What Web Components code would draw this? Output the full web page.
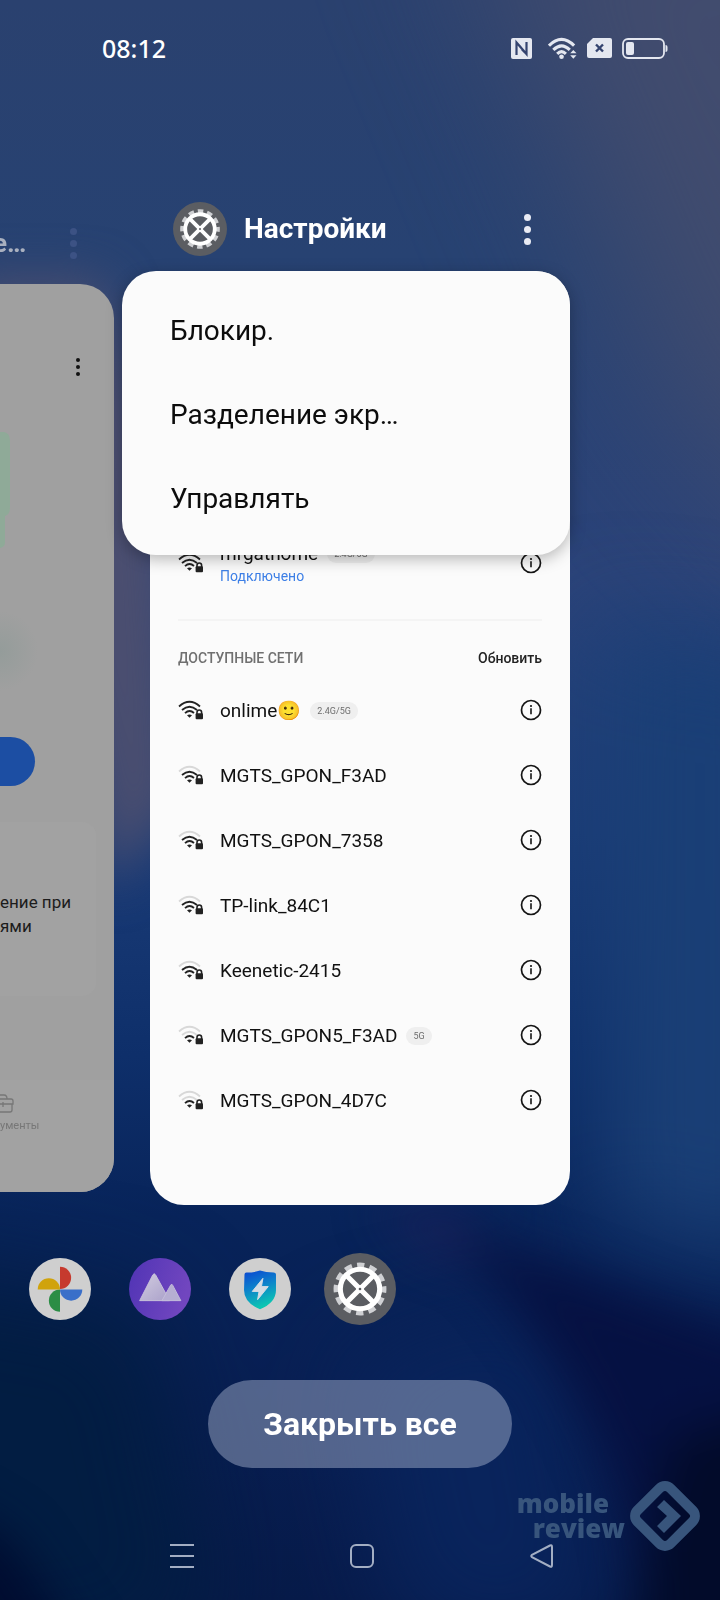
<!DOCTYPE html>
<html lang="ru">
<head>
  <meta charset="utf-8">
  <meta name="viewport" content="width=device-width, initial-scale=1">
  <title>Недавние приложения</title>
  <style>
    body {
      margin: 0;
      background: #0a2458;
      color: #111;
      font-family: Roboto, "Noto Sans", sans-serif;
    }
  </style>
</head>
<body>
  <uc-recents-screen></uc-recents-screen>

  <script>
    class Wallpaper extends HTMLElement {
      constructor() {
        super()
        this.attachShadow({ mode: 'open' })
        this.shadowRoot.innerHTML = `
          <style>
            :host {
              position: absolute;
              inset: 0;
              z-index: -1;
              overflow: hidden;
            }

            svg {
              display: block;
              width: 100%;
              height: 100%;
            }
          </style>
          <svg viewBox="0 0 720 1600" preserveAspectRatio="none" aria-hidden="true">
            <defs>
              <linearGradient id="sky" x1="0" y1="0" x2="0" y2="1">
                <stop offset="0" stop-color="#2a416f"/>
                <stop offset=".16" stop-color="#274272"/>
                <stop offset=".36" stop-color="#2b4379"/>
                <stop offset=".52" stop-color="#1b3c77"/>
                <stop offset=".66" stop-color="#0e2f6a"/>
                <stop offset=".76" stop-color="#08245a"/>
                <stop offset=".88" stop-color="#081e52"/>
                <stop offset="1" stop-color="#071a49"/>
              </linearGradient>
              <filter id="wide" x="-100%" y="-100%" width="300%" height="300%" color-interpolation-filters="sRGB"><feGaussianBlur stdDeviation="80"/></filter>
              <filter id="soft" x="-100%" y="-100%" width="300%" height="300%" color-interpolation-filters="sRGB"><feGaussianBlur stdDeviation="50"/></filter>
              <filter id="mid" x="-100%" y="-100%" width="300%" height="300%" color-interpolation-filters="sRGB"><feGaussianBlur stdDeviation="24"/></filter>
            </defs>
            <rect width="720" height="1600" fill="url(#sky)"/>
            <path d="M440-160H900V620L680 420Z" fill="#464e6e" opacity=".85" filter="url(#wide)"/>
            <g filter="url(#soft)">
              <path d="M600 620L800 660V1270L600 1220Z" fill="#1a3f76"/>
              <path d="M-120 1260L150 1310L220 1640L-120 1700Z" fill="#021d42"/>
              <path d="M340 1360L560 1300L620 1640L400 1640Z" fill="#09245c"/>
            </g>
            <g filter="url(#mid)">
              <path d="M-40 280L100 280L160 440L180 800L110 890L40 500Z" fill="#4f506f" opacity=".9"/>
              <path d="M370 1205L460 1215L520 1270L430 1250Z" fill="#221f5a" opacity=".7"/>
              <path d="M450 1232C560 1260 640 1300 800 1350V1660H640C650 1500 580 1370 450 1232Z" fill="#060f40" opacity=".9"/>
              <path d="M670 1440L800 1400V1660H630Z" fill="#020b2a"/>
              <path d="M-60 1500L10 1540L90 1660H-60Z" fill="#000c30"/>
            </g>
          </svg>
        `
      }
    }

    class StatusBar extends HTMLElement {
      constructor() {
        super()
        this.attachShadow({ mode: 'open' })
        this.shadowRoot.innerHTML = `
          <style>
            :host {
              display: flex;
              align-items: center;
              justify-content: space-between;
              height: 96px;
              padding: 0 52px 0 102px;
              color: #fff;
            }

            time {
              font: 500 25px/32px "Noto Sans", sans-serif;
            }

            div {
              display: flex;
              align-items: center;
              gap: 10px;
            }

            svg {
              display: block;
              fill: #e4e7f0;
            }

            .nfc {
              margin-right: 6px;
            }
          </style>
          <time>${this.getAttribute('time')}</time>
          <div>
            <svg class="nfc" width="21" height="21" viewBox="0 0 21 21">
              <rect width="21" height="21" rx="2"/>
              <path d="M5.500 17V4.500L15.500 16V4M5.500 4.500L10 9.500M15.500 16L11 11.500" fill="none" stroke="#34436f" stroke-width="2.200"/>
            </svg>
            <svg width="29" height="23" viewBox="0 0 30 23">
              <g fill="none" stroke="#e4e7f0" stroke-width="3.200">
                <path d="M1 8.500Q14 -4.500 27 8.500"/>
                <path d="M5.500 13Q14 4.500 22.500 13"/>
                <path d="M9.500 17Q14 12.500 18.500 17"/>
              </g>
              <circle cx="14" cy="20" r="2.400"/>
              <path d="M23 16.500L26.200 13L29.500 16.500ZM23 18.500H29.500L26.200 22Z"/>
            </svg>
            <svg width="25" height="20" viewBox="0 0 25 20">
              <path d="M6 0H23Q25 0 25 2V18Q25 20 23 20H2Q0 20 0 18V6Z"/>
              <path d="M9 6.500L16 13.500M16 6.500L9 13.500" stroke="#34436f" stroke-width="2.400"/>
            </svg>
            <svg width="46" height="21" viewBox="0 0 46 21">
              <rect x="1" y="1" width="41" height="19" rx="5" fill="none" stroke="#e4e7f0" stroke-width="1.800"/>
              <rect x="4" y="4" width="8" height="13" rx="2"/>
              <path d="M43.500 7Q45.500 7 45.500 9V12Q45.500 14 43.500 14Z"/>
            </svg>
          </div>
        `
      }
    }

    class AppIcon extends HTMLElement {
      constructor() {
        super()
        // every glyph is drawn in a 64 unit disc
        const glyphs = {
          settings: `
            <circle cx="32" cy="32" r="32" fill="#5b5d62"/>
            <circle cx="32" cy="32" r="21" fill="none" stroke="#cfd0d3" stroke-width="5" stroke-dasharray="6.500 4.496" stroke-dashoffset="3.250"/>
            <circle cx="32" cy="32" r="17.500" fill="none" stroke="#fff" stroke-width="4.500"/>
            <path d="M20 20L44 44M44 20L20 44" stroke="#fff" stroke-width="4.500"/>
            <circle cx="32" cy="32" r="3.500" fill="#fff"/>
            <circle cx="32" cy="32" r="1.200" fill="#5b5d62"/>`,
          photos: `
            <circle cx="32" cy="32" r="32" fill="#cfcfcf"/>
            <path d="M32 9A11.500 11.500 0 0 1 32 32Z" fill="#c63a2e"/>
            <path d="M55 32.500A11.500 11.500 0 0 1 32 32.500Z" fill="#3a6fc9"/>
            <path d="M32 55.500A11.500 11.500 0 0 1 32 32.500Z" fill="#2b8d45"/>
            <path d="M9 32.500A11.500 11.500 0 0 1 32 32.500Z" fill="#d0a30c"/>`,
          gallery: `
            <linearGradient id="violet" x1="0" y1="0" x2="1" y2=".3"><stop stop-color="#5034b5"/><stop offset="1" stop-color="#7146bf"/></linearGradient>
            <linearGradient id="hill" x1="0" y1="0" x2="1" y2="1"><stop stop-color="#d2cce0"/><stop offset="1" stop-color="#a9a0c9"/></linearGradient>
            <circle cx="32" cy="32" r="32" fill="url(#violet)"/>
            <path d="M11 44L24.500 17.500Q26 15 27.500 17.500L42 44Z" fill="url(#hill)" stroke="#c8c2da" stroke-linejoin="round"/>
            <path d="M34 44L43 28Q44 26 45 28L53.500 44Z" fill="#b6aed2" stroke="#c4bddb" stroke-linejoin="round"/>`,
          guard: `
            <linearGradient id="shield" x1="0" y1="0" x2=".3" y2="1"><stop stop-color="#0b45d2"/><stop offset=".5" stop-color="#0d83cb"/><stop offset="1" stop-color="#0bc5b2"/></linearGradient>
            <circle cx="32" cy="32" r="32" fill="#cfcfcf"/>
            <path d="M16 17Q16 15 18 15Q26 15 32 13Q38 15 46 15Q48.500 15 48.500 17V33Q48.500 46 32 53Q15.500 46 15.500 33Z" fill="url(#shield)"/>
            <path d="M35 21L24 34.500H31L29.500 43L40.500 29.500H33.500Z" fill="#d5dce4" stroke="#d5dce4" stroke-linejoin="round"/>`
        }

        this.attachShadow({ mode: 'open' })
        this.shadowRoot.innerHTML = `
          <style>
            :host {
              display: block;
              flex: none;
              width: 62px;
              height: 62px;
            }

            svg {
              display: block;
              width: 100%;
              height: 100%;
            }
          </style>
          <svg viewBox="0 0 64 64" aria-hidden="true">${glyphs[this.getAttribute('name')]}</svg>
        `
      }
    }

    class MoreButton extends HTMLElement {
      constructor() {
        super()
        this.attachShadow({ mode: 'open' })
        this.shadowRoot.innerHTML = `
          <style>
            :host {
              display: block;
            }

            button {
              display: flex;
              flex-direction: column;
              align-items: center;
              justify-content: center;
              gap: var(--dot-gap, 5px);
              width: 40px;
              height: 48px;
              padding: 0;
              border: 0;
              background: none;
              color: inherit;
              cursor: pointer;
            }

            i {
              width: var(--dot-size, 7px);
              height: var(--dot-size, 7px);
              border-radius: 50%;
              background: currentColor;
            }
          </style>
          <button type="button" aria-label="Ещё"><i></i><i></i><i></i></button>
        `
      }
    }

    class TaskMenu extends HTMLElement {
      constructor() {
        super()
        this.attachShadow({ mode: 'open' })
        this.shadowRoot.innerHTML = `
          <style>
            :host {
              display: none;
              flex-direction: column;
              box-sizing: border-box;
              padding: 18px 0 14px;
              border-radius: 34px;
              background: #fbfbfb;
              box-shadow: 0 4px 16px rgba(0, 0, 0, 0.28);
            }

            :host([opened]) {
              display: flex;
            }

            ::slotted(button) {
              height: 84px;
              padding: 0 48px;
              border: 0;
              background: none;
              color: #0c0c0c;
              font: 400 28px/36px Roboto, sans-serif;
              text-align: left;
              cursor: pointer;
            }
          </style>
          <slot></slot>
        `
      }
    }

    class WifiNetwork extends HTMLElement {
      constructor() {
        super()
        this.attachShadow({ mode: 'open' })
        const level = Number(this.getAttribute('level'))
        const band = this.getAttribute('band')
        const state = this.getAttribute('state')
        const shade = (n) => level >= n ? '#222' : '#d8d8d8'

        this.shadowRoot.innerHTML = `
          <style>
            :host {
              display: flex;
              align-items: center;
              gap: 16px;
              height: 65px;
            }

            svg {
              display: block;
              flex: none;
              padding-bottom: 2px;
            }

            .text {
              flex: 1;
              min-width: 0;
            }

            .name {
              display: flex;
              align-items: center;
              gap: 9px;
              font-size: 19px;
              line-height: 24px;
              color: #111;
            }

            .band {
              padding: 0 7px;
              border-radius: 9px;
              background: #efefef;
              color: #6e6e6e;
              font-size: 9px;
              line-height: 18px;
            }

            .state {
              font-size: 14px;
              line-height: 20px;
              color: #3d7fe6;
            }

            button {
              padding: 0;
              border: 0;
              background: none;
              cursor: pointer;
            }
          </style>
          <svg width="26" height="20" viewBox="0 0 26 20" aria-hidden="true">
            <g fill="none" stroke-width="1.800">
              <path d="M1 6.500Q11.500 -3 22 6.500" stroke="${shade(3)}"/>
              <path d="M4 10Q11.500 3.500 19 10" stroke="${shade(2)}"/>
              <path d="M7 13.200Q11.500 9 16 13" stroke="${shade(1)}"/>
            </g>
            <path d="M9 15.200Q11.500 13.700 14 15.200L11.500 17.800Z" fill="#222"/>
            <path d="M19 14V12.300A2.300 2.300 0 0 1 23.600 12.300V14" fill="none" stroke="#222" stroke-width="1.600"/>
            <rect x="17.600" y="13.300" width="7.400" height="6" rx="1" fill="#222"/>
          </svg>
          <div class="text">
            <div class="name"><slot></slot>${band ? `<span class="band">${band}</span>` : ''}</div>
            ${state ? `<div class="state">${state}</div>` : ''}
          </div>
          <button type="button" aria-label="Сведения о сети">
            <svg width="22" height="22" viewBox="0 0 22 22">
              <circle cx="11" cy="11" r="9.500" fill="none" stroke="#151515" stroke-width="1.700"/>
              <circle cx="11" cy="7" r="1.100" fill="#151515"/>
              <path d="M11 9.200V15.200" stroke="#151515" stroke-width="1.600"/>
            </svg>
          </button>
        `
      }
    }

    class WifiSettings extends HTMLElement {
      constructor() {
        super()
        this.attachShadow({ mode: 'open' })
        this.shadowRoot.innerHTML = `
          <style>
            :host {
              display: flex;
              flex-direction: column;
              justify-content: flex-end;
              box-sizing: border-box;
              padding: 0 28px 72px;
              border-radius: 34px;
              background: #fbfbfb;
            }

            hr {
              width: 100%;
              height: 2px;
              margin: 23px 0 17px;
              border: 0;
              background: #f4f4f4;
            }

            header {
              display: flex;
              align-items: center;
              justify-content: space-between;
              height: 40px;
            }

            h2, button {
              margin: 0;
              font: 500 14px/20px Roboto, sans-serif;
            }

            h2 {
              color: #707070;
            }

            button {
              padding: 0;
              border: 0;
              background: none;
              color: #222;
              cursor: pointer;
            }
          </style>
          <uc-wifi-network level="3" band="2.4G/5G" state="Подключено">mrgathome</uc-wifi-network>
          <hr>
          <header>
            <h2>ДОСТУПНЫЕ СЕТИ</h2>
            <button type="button">Обновить</button>
          </header>
          <uc-wifi-network level="3" band="2.4G/5G">onlime🙂</uc-wifi-network>
          <uc-wifi-network level="2">MGTS_GPON_F3AD</uc-wifi-network>
          <uc-wifi-network level="2">MGTS_GPON_7358</uc-wifi-network>
          <uc-wifi-network level="2">TP-link_84C1</uc-wifi-network>
          <uc-wifi-network level="2">Keenetic-2415</uc-wifi-network>
          <uc-wifi-network level="1" band="5G">MGTS_GPON5_F3AD</uc-wifi-network>
          <uc-wifi-network level="1">MGTS_GPON_4D7C</uc-wifi-network>
        `
      }
    }

    // current task: header, preview and the menu that drops over the preview
    class TaskCard extends HTMLElement {
      constructor() {
        super()
        this.attachShadow({ mode: 'open' })
        this.shadowRoot.innerHTML = `
          <style>
            :host {
              display: flex;
              flex-direction: column;
              gap: 15px;
            }

            header {
              display: flex;
              align-items: center;
              gap: 17px;
              padding: 0 23px;
              color: #fff;
            }

            uc-app-icon {
              width: 54px;
              height: 54px;
            }

            h1 {
              flex: 1;
              margin: 0;
              font-size: 28px;
              line-height: 36px;
              font-weight: 700;
            }

            uc-more-button {
              color: #e9ebf4;
            }

            .preview {
              position: relative;
              display: grid;
              flex: 1;
            }

            uc-task-menu {
              position: absolute;
              top: 0;
              right: 0;
              left: -28px;
            }
          </style>
          <header>
            <uc-app-icon name="settings"></uc-app-icon>
            <h1>${this.getAttribute('title-text')}</h1>
            <uc-more-button></uc-more-button>
          </header>
          <div class="preview">
            <slot></slot>
            <uc-task-menu opened>
              <button type="button">Блокир.</button>
              <button type="button">Разделение экр…</button>
              <button type="button">Управлять</button>
            </uc-task-menu>
          </div>
        `

        const menu = this.shadowRoot.querySelector('uc-task-menu')
        this.shadowRoot.querySelector('uc-more-button').addEventListener('click', () => {
          menu.toggleAttribute('opened')
        })
      }
    }

    class PreviousTask extends HTMLElement {
      constructor() {
        super()
        this.attachShadow({ mode: 'open' })
        this.shadowRoot.innerHTML = `
          <style>
            :host {
              display: flex;
              flex-direction: column;
              gap: 15px;
              box-sizing: border-box;
              padding: 15px 0 13px;
              overflow: hidden;
            }

            header {
              display: flex;
              align-items: center;
              justify-content: space-between;
              height: 52px;
              padding-right: 21px;
              color: #a9b0bf;
              font-size: 26px;
              font-weight: 700;
            }

            header span {
              margin-left: -7px;
            }

            header uc-more-button {
              color: #3c5284;
            }

            .screen {
              display: flex;
              flex: 1;
              flex-direction: column;
              align-items: flex-start;
              border-radius: 0 34px 34px 0;
              background: #a0a0a0;
              overflow: hidden;
            }

            .screen > uc-more-button {
              --dot-size: 4px;
              --dot-gap: 3px;
              align-self: flex-end;
              margin: 59px 16px 0 0;
            }

            .art {
              display: block;
              margin-top: 32px;
            }

            .action {
              width: 35px;
              height: 49px;
              margin: 24px 0 36px;
              padding: 0;
              border: 0;
              border-radius: 0 25px 25px 0;
              background: #1c4ea3;
            }

            .panel {
              display: flex;
              align-items: center;
              box-sizing: border-box;
              width: calc(100% - 18px);
              height: 174px;
              padding-top: 10px;
              border-radius: 0 14px 14px 0;
              background: #a2a2a2;
            }

            .panel p {
              margin: 0;
              font-size: 17px;
              line-height: 24px;
              color: #1c1c1c;
              white-space: nowrap;
            }

            nav {
              box-sizing: border-box;
              width: 100%;
              height: 112px;
              margin-top: auto;
              padding-top: 12px;
              background: #a2a2a2;
            }

            nav svg {
              display: block;
            }

            nav a {
              display: block;
              color: #777;
              font-size: 11px;
              line-height: 20px;
              text-decoration: none;
            }
          </style>
          <header>
            <span>е…</span>
            <uc-more-button></uc-more-button>
          </header>
          <div class="screen">
            <uc-more-button></uc-more-button>
            <svg class="art" width="114" height="290" viewBox="0 0 114 290" aria-hidden="true">
              <defs>
                <radialGradient id="haze"><stop stop-color="#949c9a"/><stop offset="1" stop-color="#a0a0a0"/></radialGradient>
              </defs>
              <path d="M0 9H4Q10 10 10 18V84Q10 92 5 93V120Q5 124 0 125Z" fill="#8faa98"/>
              <ellipse cx="0" cy="228" rx="38" ry="40" fill="url(#haze)"/>
            </svg>
            <button class="action" type="button" aria-label="Продолжить"></button>
            <div class="panel"><p>ение при<br>ями</p></div>
            <nav>
              <svg width="14" height="24" viewBox="0 0 14 24" fill="none" stroke="#777" stroke-width="1.300" aria-hidden="true">
                <path d="M0 7H11Q13 7 13 9V12H0M12 12V18Q12 20 10 20H0M0 3H4Q7 3 7 7M3 10V15"/>
              </svg>
              <a href="#">ументы</a>
            </nav>
          </div>
        `
      }
    }

    class AppDock extends HTMLElement {
      constructor() {
        super()
        this.attachShadow({ mode: 'open' })
        // the active app, last in the row, sits on the centre line
        this.shadowRoot.innerHTML = `
          <style>
            :host {
              display: flex;
              align-items: center;
              justify-content: flex-end;
              gap: 28px;
              padding-right: calc(50% - 36px);
            }

            button {
              display: grid;
              place-items: center;
              width: 72px;
              height: 72px;
              padding: 0;
              border: 0;
              background: none;
              cursor: pointer;
            }

            .active uc-app-icon {
              width: 72px;
              height: 72px;
            }
          </style>
          <button type="button" aria-label="Фото"><uc-app-icon name="photos"></uc-app-icon></button>
          <button type="button" aria-label="Галерея"><uc-app-icon name="gallery"></uc-app-icon></button>
          <button type="button" aria-label="Защита"><uc-app-icon name="guard"></uc-app-icon></button>
          <button type="button" aria-label="Настройки" class="active"><uc-app-icon name="settings"></uc-app-icon></button>
        `
      }
    }

    class NavigationBar extends HTMLElement {
      constructor() {
        super()
        this.attachShadow({ mode: 'open' })
        this.shadowRoot.innerHTML = `
          <style>
            :host {
              display: flex;
              align-items: center;
              justify-content: center;
              gap: 132px;
              height: 88px;
              padding-left: 4px;
            }

            button {
              display: grid;
              place-items: center;
              width: 48px;
              height: 48px;
              padding: 0;
              border: 0;
              background: none;
              cursor: pointer;
            }

            svg {
              display: block;
              fill: none;
              stroke: #a3aec3;
              stroke-width: 2;
            }
          </style>
          <button type="button" aria-label="Недавние"><svg width="24" height="24" viewBox="0 0 24 24"><path d="M0 1H24M0 12H24M0 23H24"/></svg></button>
          <button type="button" aria-label="Домой"><svg width="24" height="24" viewBox="0 0 24 24"><rect x="1" y="1" width="22" height="22" rx="5"/></svg></button>
          <button type="button" aria-label="Назад"><svg width="24" height="24" viewBox="0 0 24 24"><path d="M20 1.500Q22 0.500 22 3V21Q22 23.500 20 22.500L2 13.200Q0.500 12 2 10.800Z"/></svg></button>
        `
      }
    }

    class SiteMark extends HTMLElement {
      constructor() {
        super()
        this.attachShadow({ mode: 'open' })
        this.shadowRoot.innerHTML = `
          <style>
            :host {
              display: flex;
              align-items: center;
              gap: 4px;
              color: #38557c;
              pointer-events: none;
            }

            p {
              margin: 0;
              font: 800 26px/25px "Open Sans", sans-serif;
              text-align: right;
            }

            span {
              display: block;
              padding-right: 16px;
            }
          </style>
          <p><span>mobile</span>review</p>
          <svg width="72" height="72" viewBox="0 0 72 72" aria-hidden="true">
            <rect x="12.500" y="12.500" width="47" height="47" rx="8" transform="rotate(45 36 36)" fill="none" stroke="currentColor" stroke-width="10"/>
            <path d="M35 20L52 36L35 53L28 46L38 36L28 27Z" fill="currentColor"/>
          </svg>
        `
      }
    }

    class RecentsScreen extends HTMLElement {
      constructor() {
        super()
        this.attachShadow({ mode: 'open' })
        this.shadowRoot.innerHTML = `
          <style>
            :host {
              position: relative;
              z-index: 0;
              display: flex;
              flex-direction: column;
              min-height: 100vh;
              overflow: hidden;
            }

            main {
              display: grid;
              flex: 1;
              grid-template-columns: 1fr minmax(0, 420px) 1fr;
              gap: 36px;
              padding: 106px 0 48px;
            }

            .close-all {
              align-self: center;
              width: 304px;
              height: 88px;
              margin: 55px 0 44px;
              border: 0;
              border-radius: 44px;
              background: rgba(173, 184, 210, 0.46);
              color: #fff;
              font: 700 32px/40px Roboto, sans-serif;
              cursor: pointer;
            }

            uc-site-mark {
              position: absolute;
              right: 19px;
              bottom: 48px;
            }
          </style>
          <uc-wallpaper></uc-wallpaper>
          <uc-status-bar time="08:12"></uc-status-bar>
          <main>
            <uc-previous-task></uc-previous-task>
            <uc-task-card title-text="Настройки">
              <uc-wifi-settings></uc-wifi-settings>
            </uc-task-card>
          </main>
          <uc-app-dock></uc-app-dock>
          <button class="close-all" type="button">Закрыть все</button>
          <uc-navigation-bar></uc-navigation-bar>
          <uc-site-mark></uc-site-mark>
        `
      }
    }

    customElements.define('uc-wallpaper', Wallpaper)
    customElements.define('uc-status-bar', StatusBar)
    customElements.define('uc-app-icon', AppIcon)
    customElements.define('uc-more-button', MoreButton)
    customElements.define('uc-task-menu', TaskMenu)
    customElements.define('uc-wifi-network', WifiNetwork)
    customElements.define('uc-wifi-settings', WifiSettings)
    customElements.define('uc-task-card', TaskCard)
    customElements.define('uc-previous-task', PreviousTask)
    customElements.define('uc-app-dock', AppDock)
    customElements.define('uc-navigation-bar', NavigationBar)
    customElements.define('uc-site-mark', SiteMark)
    customElements.define('uc-recents-screen', RecentsScreen)
  </script>
</body>
</html>
